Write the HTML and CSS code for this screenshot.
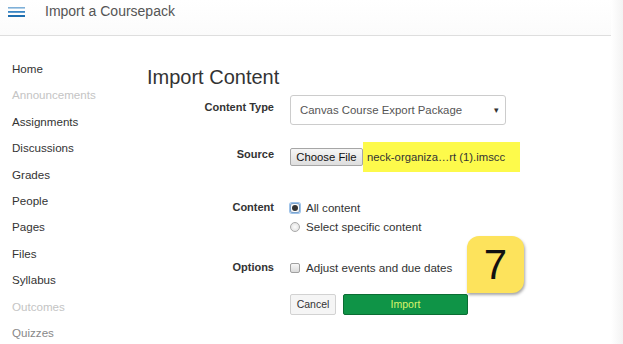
FILE: index.html
```html
<!DOCTYPE html>
<html>
<head>
<meta charset="utf-8">
<link rel="stylesheet" href="styles.css">
</head>
<body>
<div class="page">
  <header class="topbar">
    <svg class="burger" width="17" height="10" viewBox="0 0 17 10">
      <rect x="0" y="0" width="17" height="1.6" fill="#7fb0d8"/>
      <rect x="0" y="4" width="17" height="1.8" fill="#3a86c4"/>
      <rect x="0" y="8" width="17" height="2" fill="#1f6fb0"/>
    </svg>
    <span class="title">Import a Coursepack</span>
  </header>
  <div class="main">
    <nav class="nav">
      <a class="nav-item">Home</a>
      <a class="nav-item off">Announcements</a>
      <a class="nav-item">Assignments</a>
      <a class="nav-item">Discussions</a>
      <a class="nav-item">Grades</a>
      <a class="nav-item">People</a>
      <a class="nav-item">Pages</a>
      <a class="nav-item">Files</a>
      <a class="nav-item">Syllabus</a>
      <a class="nav-item off">Outcomes</a>
      <a class="nav-item fade">Quizzes</a>
    </nav>
    <section class="content">
      <h1 class="heading">Import Content</h1>
      <div class="row row-type">
        <div class="label">Content Type</div>
        <div class="select">
          <span>Canvas Course Export Package</span>
          <span class="caret">▾</span>
        </div>
      </div>
      <div class="row row-source">
        <div class="label">Source</div>
        <div class="file">
          <span class="file-btn">Choose File</span>
          <span class="file-name">neck-organiza…rt (1).imscc</span>
        </div>
      </div>
      <div class="row row-content">
        <div class="label small">Content</div>
        <div class="choices">
          <div class="choice"><span class="radio checked"><span class="dot"></span></span>All content</div>
          <div class="choice"><span class="radio"></span>Select specific content</div>
        </div>
      </div>
      <div class="row row-options">
        <div class="label small">Options</div>
        <div class="choice"><span class="checkbox"></span>Adjust events and due dates</div>
      </div>
      <div class="row row-actions">
        <div class="label"></div>
        <div class="actions">
          <span class="btn btn-cancel">Cancel</span>
          <span class="btn btn-import">Import</span>
        </div>
      </div>
      <div class="badge">7</div>
    </section>
  </div>
</div>
</body>
</html>
```
FILE: styles.css
```css
* { box-sizing: border-box; }
html, body { margin: 0; padding: 0; background: #fff; }
body {
  font-family: "Liberation Sans", Arial, sans-serif;
  color: #333;
  width: 623px;
  height: 344px;
  overflow: hidden;
}
.page { position: relative; width: 623px; height: 344px; }
.page::after {
  content: "";
  position: absolute;
  right: 0; top: 0; bottom: 0;
  width: 12px;
  background: linear-gradient(to right, rgba(240,240,240,0), rgba(238,238,238,0.7));
}
.topbar {
  width: 611px;
  height: 36px;
  border-bottom: 1px solid #dedede;
  display: flex;
  align-items: flex-start;
  background: linear-gradient(#fff, #fbfbfb);
}
.burger { margin: 7px 0 0 8px; }
.title {
  margin: 3px 0 0 20px;
  font-size: 14px;
  line-height: 16px;
  color: #555;
}
.main { display: flex; }
.nav {
  width: 147px;
  padding: 20px 0 0 12px;
  display: flex;
  flex-direction: column;
}
.nav-item {
  height: 26.4px;
  line-height: 26.4px;
  font-size: 11.6px;
  color: #333;
}
.nav-item.off { color: #c4c4c4; }
.nav-item.fade { color: #888; }
.content {
  position: relative;
  flex: 1;
  padding-top: 29px;
}
.heading {
  margin: 0;
  font-size: 20px;
  line-height: 24px;
  font-weight: normal;
  color: #333;
}
.row { display: flex; align-items: flex-start; gap: 16px; }
.label {
  width: 127px;
  text-align: right;
  font-weight: bold;
  font-size: 11px;
  line-height: 15px;
  padding-top: 4.5px;
  color: #333;
}
.label.small { padding-top: 2px; }
.row-type { margin-top: 6px; }
.row-source { margin-top: 17px; }
.row-content { margin-top: 26px; }
.row-options { margin-top: 22px; }
.row-actions { margin-top: 17px; }
.select {
  width: 216px;
  height: 30px;
  border: 1px solid #ccc;
  border-radius: 3px;
  display: flex;
  align-items: center;
  justify-content: space-between;
  padding: 0 6px 0 9px;
  font-size: 11.4px;
  color: #555;
}
.caret { font-size: 9px; color: #333; }
.file { display: flex; align-items: center; height: 30px; }
.file-btn {
  width: 73px;
  height: 18px;
  border: 1px solid #a6a6a6;
  border-radius: 2px;
  background: linear-gradient(#f6f6f6, #dedede);
  font-size: 11.3px;
  line-height: 16px;
  text-align: center;
  color: #111;
}
.file-name {
  height: 30px;
  width: 157px;
  background: #fdfa4b;
  font-size: 11.3px;
  line-height: 30px;
  padding-left: 4px;
  color: #333;
}
.choices { display: flex; flex-direction: column; }
.choice {
  display: flex;
  align-items: center;
  height: 19px;
  font-size: 11.6px;
  color: #333;
}
.radio {
  width: 10px;
  height: 10px;
  border-radius: 50%;
  border: 1px solid #a9a9a9;
  background: radial-gradient(#fdfdfd, #dcdcdc);
  margin-right: 6px;
  display: flex;
  align-items: center;
  justify-content: center;
}
.radio.checked {
  box-shadow: 0 0 0 1px #9fc3e9;
  border-radius: 2px;
  border-color: #7aa3cf;
}
.radio.checked .dot {
  width: 6px;
  height: 6px;
  border-radius: 50%;
  background: #333;
  box-shadow: 0 0 0 1px #fff;
}
.checkbox {
  width: 10px;
  height: 10px;
  border: 1px solid #a0a0a0;
  border-radius: 2px;
  background: linear-gradient(#f7f7f7, #dadada);
  margin-right: 6px;
}
.actions { display: flex; gap: 7px; }
.btn {
  height: 21px;
  font-size: 10.5px;
  line-height: 19px;
  text-align: center;
  border-radius: 2px;
}
.btn-cancel {
  width: 46px;
  border: 1px solid #d2d2d2;
  background: #f5f5f5;
  color: #333;
}
.btn-import {
  width: 125px;
  border: 1px solid #0b6d33;
  background: #0f9447;
  color: #d9f56a;
}
.badge {
  position: absolute;
  left: 320px;
  top: 200px;
  width: 57px;
  height: 57px;
  background: #fde35c;
  border-radius: 12px 12px 12px 0;
  box-shadow: 1px 2px 3px rgba(0,0,0,0.35);
  font-size: 42px;
  line-height: 57px;
  text-align: center;
  color: #111;
}
```
